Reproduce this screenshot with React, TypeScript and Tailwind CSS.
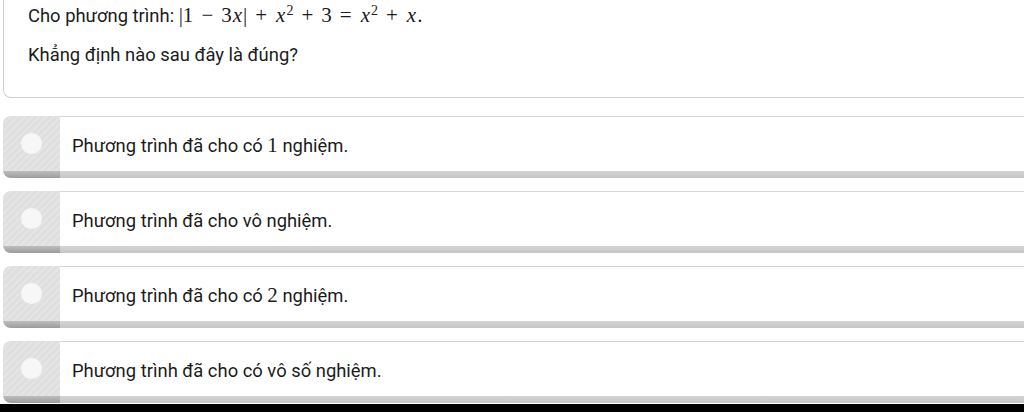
const options = [
  { pre: 'Phương trình đã cho có ', num: '1', post: ' nghiệm.' },
  { pre: 'Phương trình đã cho vô nghiệm.', num: '', post: '' },
  { pre: 'Phương trình đã cho có ', num: '2', post: ' nghiệm.' },
  { pre: 'Phương trình đã cho có vô số nghiệm.', num: '', post: '' },
];

function M({ children }: { children: React.ReactNode }) {
  return <span className="font-['Liberation_Serif',serif] text-[21px]">{children}</span>;
}

function X() {
  return <i className="mx-[1px] font-['Liberation_Serif',serif]">x</i>;
}

function Op({ children }: { children: React.ReactNode }) {
  return <span className="mx-[8px]">{children}</span>;
}

function Option({ pre, num, post }: { pre: string; num: string; post: string }) {
  return (
    <div className="ml-[3px] flex h-[62px] overflow-hidden rounded-l-lg">
      {/* left radio block */}
      <div className="flex w-[57px] shrink-0 flex-col">
        <div
          className="flex flex-1 items-center justify-center bg-[#dfdfdf]"
          style={{
            backgroundImage:
              'repeating-linear-gradient(135deg, rgba(255,255,255,0.18) 0 2px, transparent 2px 5px)',
          }}
        >
          <div className="h-[21px] w-[21px] rounded-full bg-[#f7f7f7]" />
        </div>
        <div className="h-[7px] bg-gradient-to-b from-[#bdbdbd] to-[#9c9c9c]" />
      </div>
      {/* answer body */}
      <div className="flex flex-1 flex-col">
        <div className="flex flex-1 items-center border-t border-[#d6d6d6] bg-white pl-[12px] pt-[3px] font-['Roboto',sans-serif] text-[18.4px] text-[#1b1b1b]">
          <span>
            {pre}
            {num && <M>{num}</M>}
            {post}
          </span>
        </div>
        <div className="h-[7px] bg-gradient-to-b from-[#d4d4d4] to-[#c6c6c6]" />
      </div>
    </div>
  );
}

export default function App() {
  return (
    <div className="flex h-[412px] w-[1024px] flex-col overflow-hidden bg-white">
      {/* question card */}
      <div className="ml-[3px] h-[98px] shrink-0 rounded-bl-lg border-b border-l border-[#d0d0d0] pl-[24px] font-['Roboto',sans-serif] text-[18.4px] text-[#1b1b1b]">
        <div className="mt-[3px] flex h-[26px] items-center">
          <span>Cho phương trình:&nbsp;</span>
          <M>
            |1<Op>−</Op>3<X />|<Op>+</Op>
            <X />
            <sup className="text-[14px]">2</sup>
            <Op>+</Op>3<Op>=</Op>
            <X />
            <sup className="text-[14px]">2</sup>
            <Op>+</Op>
            <X />.
          </M>
        </div>
        <div className="mt-[13px] h-[26px] leading-[26px]">Khẳng định nào sau đây là đúng?</div>
      </div>

      <div className="mt-[18px] flex flex-col gap-[13px]">
        {options.map((o, i) => (
          <Option key={i} {...o} />
        ))}
      </div>

      <div className="mt-auto h-[8px] bg-black" />
    </div>
  );
}
